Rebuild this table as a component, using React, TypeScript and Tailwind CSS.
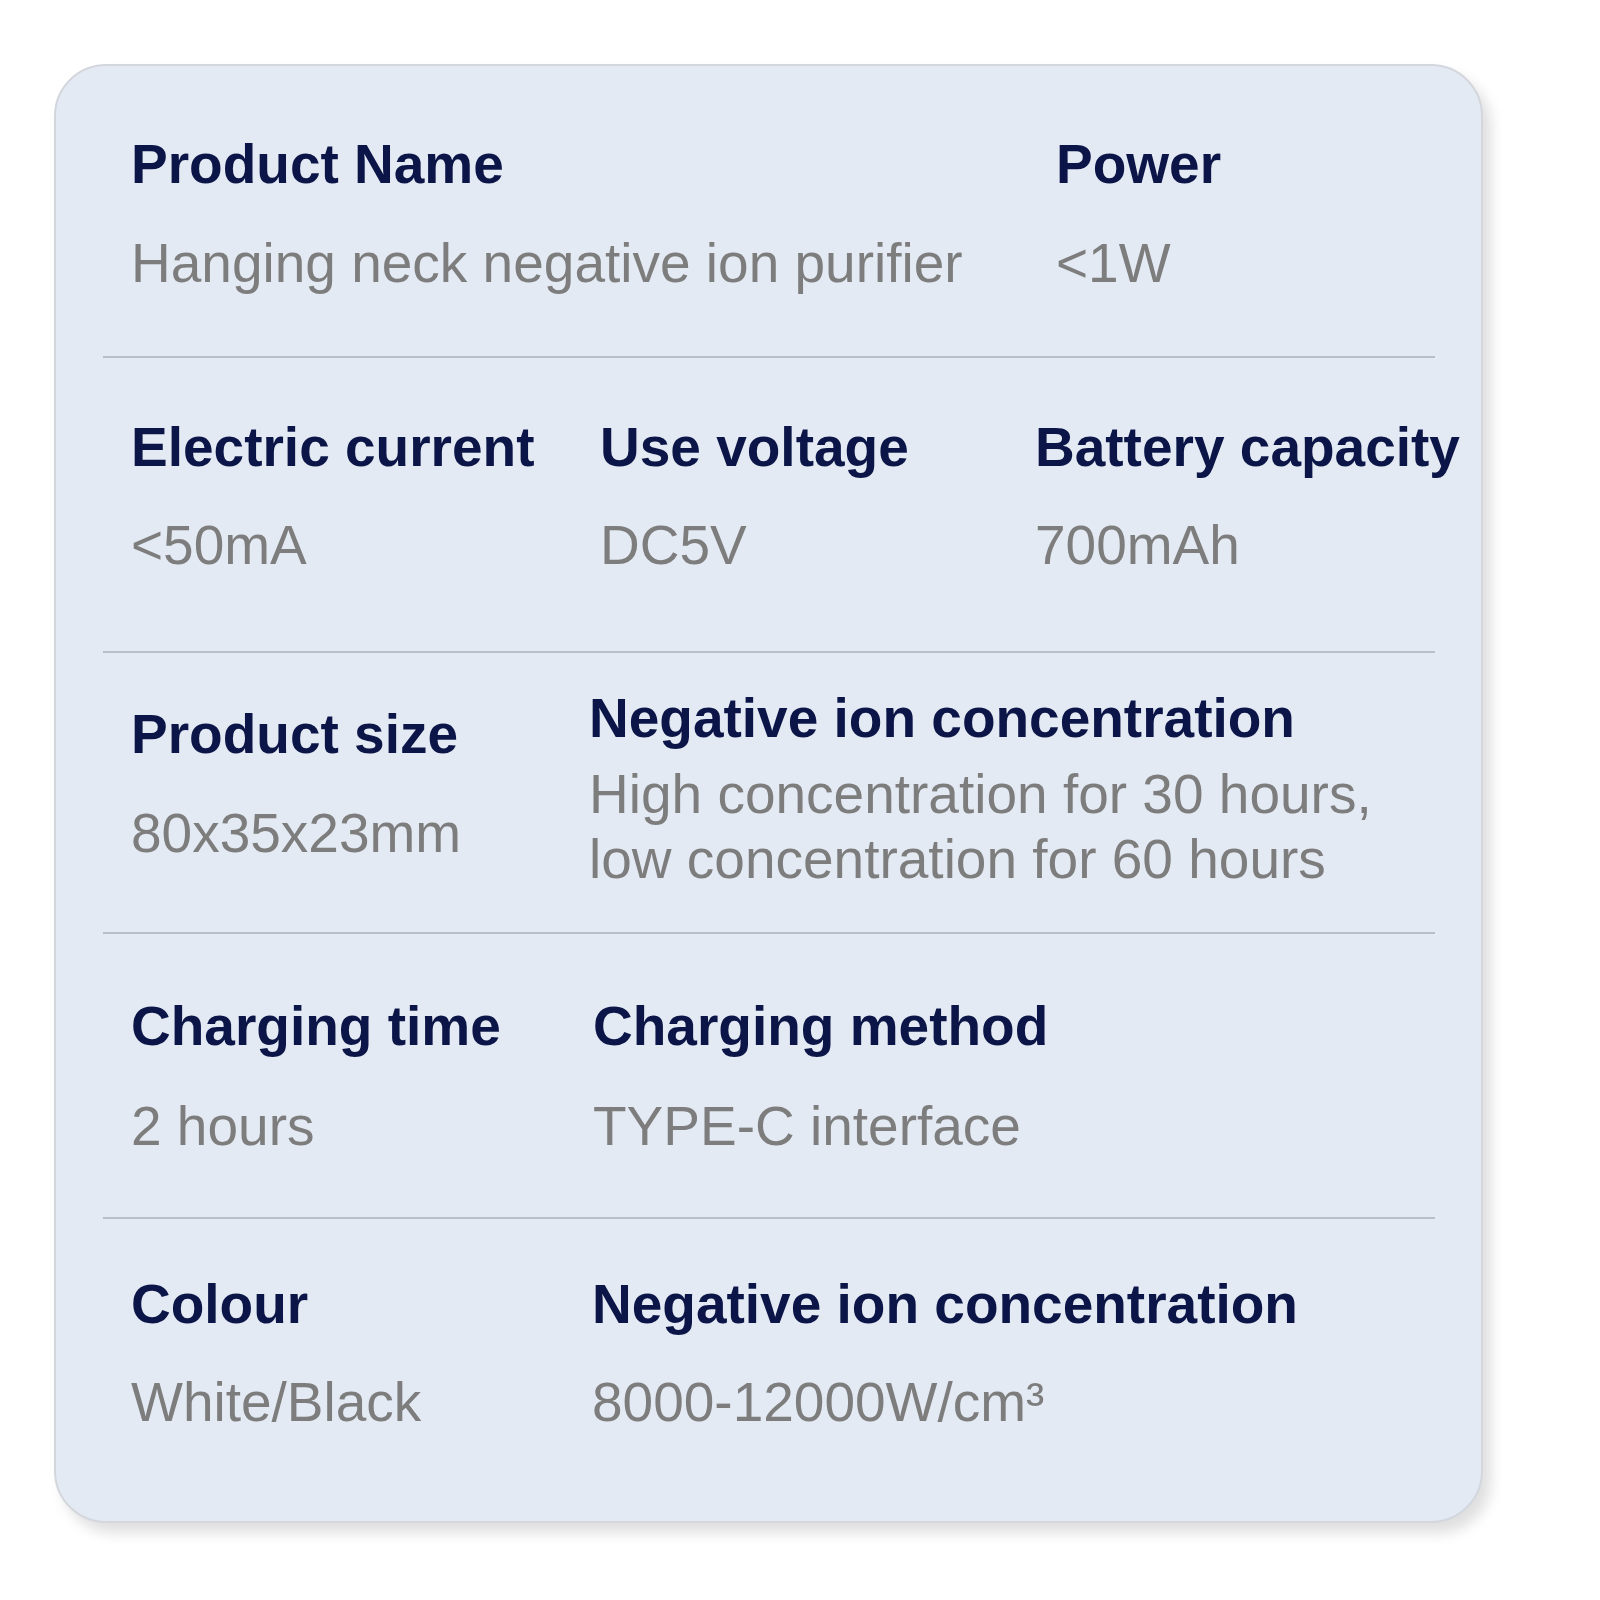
import React from "react";

const label = "text-[55px] leading-[60px] font-bold text-[#0b1547] whitespace-nowrap";
const value = "text-[55px] leading-[60px] text-[#7d7d7d] whitespace-nowrap";

function Divider() {
  return <div className="h-[2px] w-full bg-[#babec6]" />;
}

export default function App() {
  return (
    <div
      className="w-[1600px] h-[1600px] bg-white relative"
      style={{ fontFamily: '"Liberation Sans", Arial, sans-serif' }}
    >
      <div className="pt-[64px] pl-[54px]">
        <div className="w-[1429px] h-[1459px] rounded-[52px] bg-[#e4eaf3] border-2 border-[#d3d7dd] shadow-[8px_10px_14px_rgba(0,0,0,0.13)] pl-[47px] pr-[46px] box-border">
          {/* Row 1 */}
          <div className="flex pl-[28px] pt-[68px] pb-[63px]">
            <div className="w-[925px] shrink-0 flex flex-col">
              <div className={label}>Product Name</div>
              <div className={`${value} mt-[39px]`}>Hanging neck negative ion purifier</div>
            </div>
            <div className="shrink-0 flex flex-col">
              <div className={label}>Power</div>
              <div className={`${value} mt-[39px]`}>&lt;1W</div>
            </div>
          </div>
          <Divider />
          {/* Row 2 */}
          <div className="flex pl-[28px] pt-[59px] pb-[76px]">
            <div className="w-[469px] shrink-0 flex flex-col">
              <div className={label}>Electric current</div>
              <div className={`${value} mt-[38px]`}>&lt;50mA</div>
            </div>
            <div className="w-[435px] shrink-0 flex flex-col">
              <div className={label}>Use voltage</div>
              <div className={`${value} mt-[38px]`}>DC5V</div>
            </div>
            <div className="shrink-0 flex flex-col">
              <div className={label}>Battery capacity</div>
              <div className={`${value} mt-[38px]`}>700mAh</div>
            </div>
          </div>
          <Divider />
          {/* Row 3 */}
          <div className="flex items-start pl-[28px] h-[279px]">
            <div className="w-[458px] shrink-0 flex flex-col pt-[51px]">
              <div className={label}>Product size</div>
              <div className={`${value} mt-[39px]`}>80x35x23mm</div>
            </div>
            <div className="shrink-0 flex flex-col pt-[35px]">
              <div className={label}>Negative ion concentration</div>
              <div className="text-[55px] leading-[65px] text-[#7d7d7d] whitespace-nowrap mt-[14px]">
                High concentration for 30 hours,
                <br />
                low concentration for 60 hours
              </div>
            </div>
          </div>
          <Divider />
          {/* Row 4 */}
          <div className="flex pl-[28px] pt-[62px] pb-[61px]">
            <div className="w-[462px] shrink-0 flex flex-col">
              <div className={label}>Charging time</div>
              <div className={`${value} mt-[40px]`}>2 hours</div>
            </div>
            <div className="shrink-0 flex flex-col">
              <div className={label}>Charging method</div>
              <div className={`${value} mt-[40px]`}>TYPE-C interface</div>
            </div>
          </div>
          <Divider />
          {/* Row 5 */}
          <div className="flex pl-[28px] pt-[55px]">
            <div className="w-[461px] shrink-0 flex flex-col">
              <div className={label}>Colour</div>
              <div className={`${value} mt-[38px]`}>White/Black</div>
            </div>
            <div className="shrink-0 flex flex-col">
              <div className={label}>Negative ion concentration</div>
              <div className={`${value} mt-[38px]`}>8000-12000W/cm³</div>
            </div>
          </div>
        </div>
      </div>
    </div>
  );
}
